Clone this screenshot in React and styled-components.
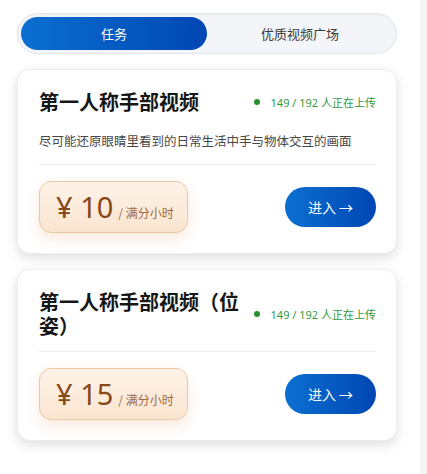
import React, { useState } from "react";
import styled, { createGlobalStyle } from "styled-components";

const Global = createGlobalStyle`
  body {
    margin: 0;
    background: #ffffff;
    font-family: "Noto Sans", "Noto Sans CJK SC", sans-serif;
    color: #1a1a1a;
  }
`;

const Layout = styled.div`
  display: flex;
  min-height: 100vh;
`;

const Page = styled.div`
  flex: 1;
  padding: 13px 23px 20px 17px;
  display: flex;
  flex-direction: column;
  gap: 15px;
`;

const Rail = styled.div`
  width: 7px;
  flex-shrink: 0;
  background: #f4f4f5;
`;

const Tabs = styled.div`
  display: grid;
  grid-template-columns: 1fr 1fr;
  padding: 3px;
  border-radius: 21px;
  background: #f3f5f8;
  border: 1px solid #e2e5ea;
  box-shadow: inset 0 1px 2px rgba(0, 0, 0, 0.03);
`;

const Tab = styled.button`
  height: 33px;
  border: 0;
  border-radius: 17px;
  font-family: "Noto Sans CJK SC", sans-serif;
  font-size: 13px;
  cursor: pointer;
  color: ${(p) => (p.$active ? "#ffffff" : "#3a3a3a")};
  background: ${(p) =>
    p.$active ? "linear-gradient(90deg, #0b6fd1 0%, #0047b4 100%)" : "transparent"};
`;

const Card = styled.div`
  background: #fff;
  border-radius: 13px;
  border: 1px solid #eeeeee;
  box-shadow: 0 4px 12px rgba(0, 0, 0, 0.13);
  padding: 20px 20px 20px 21px;
  display: flex;
  flex-direction: column;
`;

const Header = styled.div`
  display: flex;
  align-items: center;
  justify-content: space-between;
  gap: 12px;
`;

const Title = styled.h2`
  margin: 0;
  font-family: "Noto Sans CJK SC", sans-serif;
  font-size: 20px;
  line-height: 24px;
  font-weight: 700;
  color: #161616;
  flex: 1;
  min-width: 0;
`;

const Status = styled.div`
  display: flex;
  align-items: center;
  flex-shrink: 0;
  gap: 11px;
  font-size: 11px;
  color: #2f9a41;
  white-space: nowrap;
`;

const Dot = styled.span`
  width: 6px;
  height: 6px;
  border-radius: 50%;
  background: #23922f;
`;

const Desc = styled.p`
  margin: 17px 0 0;
  font-family: "Noto Sans CJK SC", sans-serif;
  font-size: 12.5px;
  line-height: 20px;
  color: #474747;
`;

const Divider = styled.div`
  height: 1px;
  background: #eeeeee;
  margin: 13px 0 16px;
`;

const Footer = styled.div`
  display: flex;
  align-items: center;
  justify-content: space-between;
`;

const Price = styled.div`
  width: 149px;
  height: 52px;
  box-sizing: border-box;
  border-radius: 12px;
  border: 1px solid #ebc7a3;
  background: linear-gradient(180deg, #fdf2e7 0%, #fbe5d1 100%);
  box-shadow: 0 6px 14px rgba(226, 160, 100, 0.22);
  display: flex;
  align-items: baseline;
  padding: 0 0 0 16px;
  line-height: 50px;
  color: #864719;
`;

const Amount = styled.span`
  font-size: 29px;
  font-weight: 400;
`;

const Unit = styled.span`
  font-family: "Noto Sans CJK SC", sans-serif;
  font-size: 12px;
  color: #9c6a45;
  margin-left: 5px;
`;

const Enter = styled.button`
  width: 91px;
  height: 40px;
  border: 0;
  border-radius: 20px;
  background: linear-gradient(90deg, #0b6fd1 0%, #0047b4 100%);
  color: #fff;
  font-family: "Noto Sans CJK SC", sans-serif;
  font-size: 14px;
  cursor: pointer;
`;

const tasks = [
  {
    title: "第一人称手部视频",
    desc: "尽可能还原眼睛里看到的日常生活中手与物体交互的画面",
    price: 10,
  },
  { title: "第一人称手部视频（位姿）", price: 15 },
];

export default function App() {
  const [tab, setTab] = useState(0);
  return (
    <>
      <Global />
      <Layout>
        <Page>
          <Tabs>
            <Tab $active={tab === 0} onClick={() => setTab(0)}>任务</Tab>
            <Tab $active={tab === 1} onClick={() => setTab(1)}>优质视频广场</Tab>
          </Tabs>
          {tasks.map((t) => (
            <Card key={t.title}>
              <Header>
                <Title>{t.title}</Title>
                <Status>
                  <Dot />
                  149 / 192 人正在上传
                </Status>
              </Header>
              {t.desc && <Desc>{t.desc}</Desc>}
              <Divider />
              <Footer>
                <Price>
                  <Amount>¥ {t.price}</Amount>
                  <Unit>/ 满分小时</Unit>
                </Price>
                <Enter>进入 →</Enter>
              </Footer>
            </Card>
          ))}
        </Page>
        <Rail />
      </Layout>
    </>
  );
}
